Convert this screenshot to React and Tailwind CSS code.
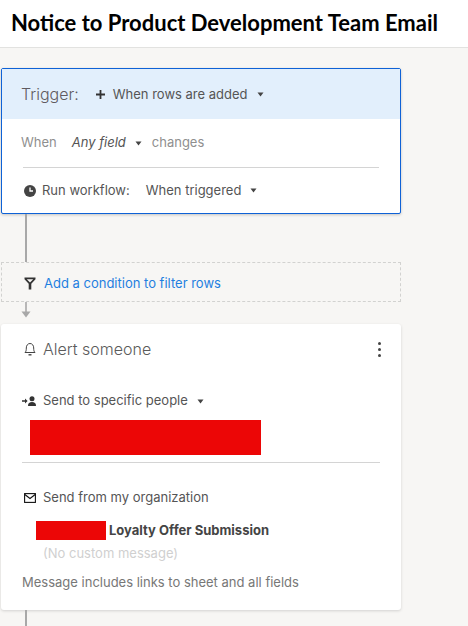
import React from 'react';

const Caret = () => (
  <svg width="7" height="5" viewBox="0 0 7 5" className="shrink-0">
    <path d="M0.5 0.5h6L3.5 4.5z" fill="#444" />
  </svg>
);

const App = () => {
  return (
    <div className="h-[626px] w-[468px] overflow-hidden bg-[#f7f6f4] font-['Inter',sans-serif] text-[13px] text-[#555]">
      {/* Title bar */}
      <div className="h-[48px] border-b border-[#e2e2e0] bg-white pl-[11px] pt-[9px]">
        <h1 className="font-['Lato',sans-serif] text-[22px] leading-[27px] font-bold whitespace-nowrap text-black">
          Notice to Product Development Team Email
        </h1>
      </div>

      <div className="ml-[1px] w-[400px] pt-[20px]">
        {/* Trigger card */}
        <div className="h-[146px] rounded-[2px] border border-[#0f62d6] bg-white shadow-[0_1px_3px_rgba(0,0,0,0.2)]">
          <div className="flex h-[50px] items-center bg-[#e2effc] pl-[19px]">
            <span className="text-[16px] font-light text-[#5f5a60]">Trigger:</span>
            <svg width="9" height="9" viewBox="0 0 9 9" className="ml-[17px]">
              <path d="M3.6 0h1.8v3.6H9v1.8H5.4V9H3.6V5.4H0V3.6h3.6z" fill="#333" />
            </svg>
            <span className="mt-[2px] ml-[8px]">When rows are added</span>
            <span className="ml-[9px]"><Caret /></span>
          </div>
          <div className="flex h-[48px] items-center pl-[19px] text-[#8f8f8f]">
            <span>When</span>
            <span className="ml-[15px] text-[#555] italic">Any field</span>
            <span className="ml-[9px]"><Caret /></span>
            <span className="ml-[10px]">changes</span>
          </div>
          <div className="mx-[21px] h-px bg-[#d4d4d4]" />
          <div className="flex h-[45px] items-center pl-[22px]">
            <svg width="12" height="12" viewBox="0 0 12 12">
              <circle cx="6" cy="6" r="6" fill="#444" />
              <path d="M6 2.5V6H9" stroke="#fff" strokeWidth="1.3" fill="none" />
            </svg>
            <span className="ml-[6px]">Run workflow:</span>
            <span className="ml-[16px]">When triggered</span>
            <span className="ml-[9px]"><Caret /></span>
          </div>
        </div>

        {/* Connector */}
        <div className="ml-[24px] h-[48px] w-[2px] bg-[#a8a8a8]" />

        {/* Condition */}
        <div className="flex h-[40px] items-center border border-dashed border-[#d2d2d0] pl-[22px]">
          <svg width="12" height="13" viewBox="0 0 12 13" className="mt-[2px]">
            <path d="M0.5 0.5h11v1.700L7.300 6.700V12.500H4.700V6.700L0.500 2.200z M2.800 2.300L6 5.600L9.200 2.300z" fill="#333" fillRule="evenodd" />
          </svg>
          <span className="mt-[4px] ml-[8px] text-[#1f7fe0]">Add a condition to filter rows</span>
        </div>

        {/* Arrow */}
        <svg width="10" height="16" viewBox="0 0 10 16" className="ml-[20px] block">
          <path d="M4.2 0h1.6v10H4.2z" fill="#a8a8a8" />
          <path d="M0.5 9.5h9L5 15.5z" fill="#a8a8a8" />
        </svg>

        {/* Alert card */}
        <div className="mt-[6px] h-[286px] rounded-[3px] bg-white shadow-[0_1px_3px_rgba(0,0,0,0.15)]">
          <div className="flex h-[50px] items-center justify-between pr-[20px] pl-[23px]">
            <div className="flex items-center">
              <svg width="12" height="14" viewBox="0 0 12 14" fill="none" stroke="#444" strokeWidth="1">
                <path d="M1 10.5c1-1 1.3-2 1.3-4.5C2.3 3.5 3.7 1.5 6 1.5S9.7 3.500 9.700 6c0 2.500.3 3.500 1.300 4.500z" />
                <path d="M4.500 12.800h3" strokeWidth="1.400" />
              </svg>
              <span className="ml-[7px] text-[16px] font-light text-[#5b5b5b]">Alert someone</span>
            </div>
            <div className="flex flex-col gap-[3px]">
              <span className="h-[3px] w-[3px] rounded-full bg-[#444]" />
              <span className="h-[3px] w-[3px] rounded-full bg-[#444]" />
              <span className="h-[3px] w-[3px] rounded-full bg-[#444]" />
            </div>
          </div>

          <div className="mt-[19px] flex h-[16px] items-center pl-[21px]">
            <svg width="14" height="10" viewBox="0 0 14 10">
              <path d="M0 4.200h3V2.500L5.600 5 3 7.500V5.800H0z" fill="#333" />
              <circle cx="10" cy="2.800" r="2.500" fill="#333" />
              <path d="M6 10c0-3 1.500-4 4-4s4 1 4 4z" fill="#333" />
            </svg>
            <span className="ml-[7px]">Send to specific people</span>
            <span className="ml-[9px]"><Caret /></span>
          </div>

          <div className="mt-[11px] ml-[29px] h-[35px] w-[231px] bg-[#ec0606]" />
          <div className="mx-[21px] mt-[7px] h-px bg-[#d4d4d4]" />

          <div className="mt-[27px] flex h-[16px] items-center pl-[23px]">
            <svg width="12" height="10" viewBox="0 0 12 10" fill="none" stroke="#111" strokeWidth="1.100">
              <rect x="0.600" y="0.600" width="10.800" height="8.800" />
              <path d="M0.800 1.500L6 5.500l5.200-4" />
            </svg>
            <span className="ml-[7px]">Send from my organization</span>
          </div>

          <div className="mt-[15px] ml-[35px] flex h-[19px] items-center">
            <div className="h-[19px] w-[70px] bg-[#ec0606]" />
            <span className="ml-[3px] font-bold text-[#444]">Loyalty Offer Submission</span>
          </div>

          <div className="mt-[4px] ml-[42px] text-[#d0d0d0]">(No custom message)</div>
          <div className="mt-[9px] ml-[21px] text-[#777]">Message includes links to sheet and all fields</div>
        </div>

        <div className="ml-[24px] h-[16px] w-[2px] bg-[#a8a8a8]" />
      </div>
    </div>
  );
};

export default App;
